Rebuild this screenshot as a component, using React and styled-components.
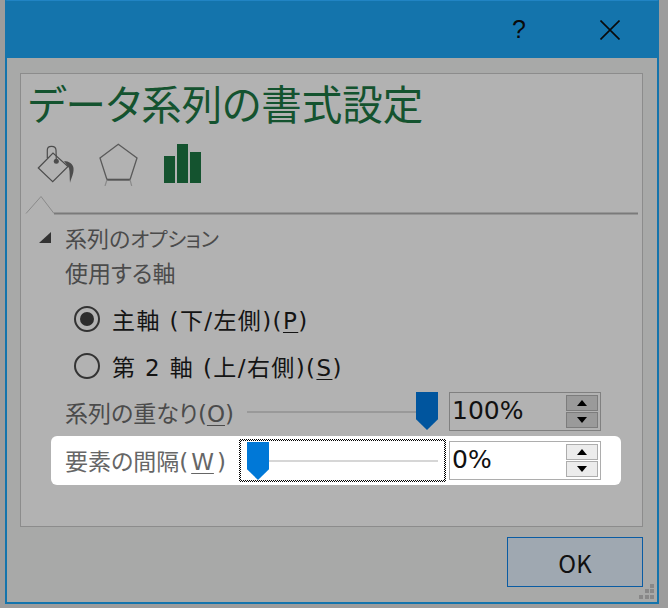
import React from 'react';
import styled, { createGlobalStyle } from 'styled-components';

const Global = createGlobalStyle`
  html, body { margin: 0; padding: 0; background: #9c9c9c; }
  body { font-family: "DejaVu Sans", "Noto Sans CJK JP", sans-serif; }
`;

const Screen = styled.div`
  width: 668px;
  height: 608px;
  padding-left: 5px;
  box-sizing: border-box;
  background: #9c9c9c;
  overflow: hidden;
  font-feature-settings: "palt";
`;

const Dialog = styled.div`
  width: 654px;
  height: 604px;
  box-sizing: border-box;
  border: 2px solid #1474ac;
  border-top: 1px solid #2184c4;
  display: flex;
  flex-direction: column;
  background: #a8a9a8;
`;

const TitleBar = styled.div`
  height: 57px;
  flex: none;
  background: #1474ac;
  display: flex;
  align-items: center;
  justify-content: flex-end;
  padding-right: 37px;
  gap: 74px;
`;

const Help = styled.span`
  font-family: "Liberation Sans", sans-serif;
  font-size: 25px;
  color: #0a0a0a;
  line-height: 1;
`;

const Body = styled.div`
  flex: 1;
  padding: 15px 14px 0 13px;
  display: flex;
  flex-direction: column;
  position: relative;
`;

const Panel = styled.div`
  height: 454px;
  box-sizing: border-box;
  border: 1px solid #8c8c8c;
  background: #b2b2b2;
  display: flex;
  flex-direction: column;
`;

const Title = styled.div`
  font-family: "Noto Sans CJK JP", sans-serif;
  font-size: 40.5px;
  line-height: 58px;
  color: #14532f;
  padding-left: 7px;
  height: 60px;
`;

const IconRow = styled.div`
  display: flex;
  align-items: flex-start;
  height: 50px;
  padding-left: 15px;
  margin-top: 8px;
`;

const TabLine = styled.svg`
  display: block;
  width: 621px;
  height: 20px;
  margin-top: 3px;
`;

const Section = styled.div`
  display: flex;
  align-items: center;
  height: 30px;
  margin-top: 7px;
  padding-left: 18px;
  gap: 14px;
  font-size: 22px;
  color: #4b4b4b;
`;

const Arrow = styled.span`
  width: 0;
  height: 0;
  border-left: 12px solid transparent;
  border-bottom: 11px solid #333;
`;

const SmallKana = styled.span`
  font-size: 20.5px;
  letter-spacing: -0.4px;
`;

const Label = styled.div`
  height: 30px;
  line-height: 30px;
  margin-top: 7px;
  padding-left: 44px;
  font-size: 23px;
  color: #4b4b4b;
`;

const Options = styled.div`
  display: flex;
  flex-direction: column;
  gap: 19px;
  margin-top: 16px;
  padding-left: 53px;
`;

const Option = styled.label`
  display: flex;
  align-items: center;
  gap: 12px;
  height: 28px;
  font-size: 23px;
  letter-spacing: 1.4px;
  color: #141414;
`;

const RadioMark = styled.span`
  width: 26px;
  height: 26px;
  box-sizing: border-box;
  border: 2px solid #333;
  border-radius: 50%;
  display: flex;
  align-items: center;
  justify-content: center;
  &::after {
    content: '';
    display: ${p => (p.$on ? 'block' : 'none')};
    width: 14px;
    height: 14px;
    border-radius: 50%;
    background: #2c2c2c;
  }
`;

const Key = styled.span`
  text-decoration: underline;
  text-underline-offset: 3px;
  text-decoration-thickness: 1px;
  margin: 0 ${p => p.$gap || 0}px;
`;

const Row = styled.div`
  display: flex;
  align-items: center;
  margin: ${p => (p.$active ? '4px 21px 0 30px' : '11px 0 0 44px')};
  padding: ${p => (p.$active ? '0 0 0 14px' : '0')};
  height: ${p => (p.$active ? '49px' : '41px')};
  background: ${p => (p.$active ? '#fff' : 'transparent')};
  border-radius: 6px;
  font-size: 23px;
  color: #4b4b4b;
  white-space: nowrap;
`;

const RowLabel = styled.span`
  width: ${p => (p.$active ? '174px' : '182px')};
  padding-bottom: ${p => (p.$active ? '2px' : '0')};
  flex: none;
  color: ${p => (p.$active ? '#666' : '#4b4b4b')};
`;

const Focus = styled.div`
  width: 207px;
  height: 43px;
  box-sizing: border-box;
  padding: 2px;
  flex: none;
  background: repeating-conic-gradient(#000 0 25%, #fff 0 50%) 0 0 / 2px 2px;
`;

const SliderBox = styled.div`
  position: relative;
  height: 100%;
  width: ${p => (p.$active ? '100%' : '191px')};
  background: ${p => (p.$active ? '#fff' : 'transparent')};
  flex: none;
  display: flex;
  align-items: center;
`;

const Track = styled.div`
  height: 2px;
  flex: 1;
  margin: ${p => (p.$active ? '0 6px' : '0 2px 0 0')};
  background: ${p => (p.$active ? '#d6d6d6' : '#999')};
`;

const Thumb = styled.div`
  position: absolute;
  top: 1px;
  left: ${p => (p.$active ? '6px' : '169px')};
  width: 22px;
  height: 38px;
  background: ${p => (p.$active ? '#0078d7' : '#00559e')};
  clip-path: polygon(0 0, 100% 0, 100% 72%, 50% 100%, 0 72%);
`;

const Spin = styled.div`
  width: 152px;
  height: 39px;
  box-sizing: border-box;
  border: 1px solid ${p => (p.$active ? '#adadad' : '#808080')};
  margin-left: ${p => (p.$active ? '3px' : '11px')};
  background: ${p => (p.$active ? '#fff' : 'transparent')};
  display: flex;
  align-items: center;
  padding: 2px 2px 2px 2px;
  font-size: 25px;
  color: #111;
`;

const SpinValue = styled.span`
  flex: 1;
  padding-bottom: 2px;
`;

const SpinButtons = styled.div`
  width: 32px;
  height: 100%;
  display: flex;
  flex-direction: column;
  gap: 1px;
`;

const SpinButton = styled.div`
  flex: 1;
  border: 1px solid ${p => (p.$active ? '#adadad' : '#7c7c7c')};
  background: ${p => (p.$active ? '#ececec' : '#9a9a9a')};
  display: flex;
  align-items: center;
  justify-content: center;
  &::after {
    content: '';
    width: 0;
    height: 0;
    border-left: 5px solid transparent;
    border-right: 5px solid transparent;
    ${p => (p.$down ? 'border-top: 6px solid #000;' : 'border-bottom: 6px solid #000;')}
  }
`;

const Footer = styled.div`
  display: flex;
  justify-content: flex-end;
  margin-top: 10px;
`;

const OkButton = styled.button`
  width: 136px;
  height: 50px;
  box-sizing: border-box;
  border: 1px solid #0a5ca3;
  background: #9fa8b1;
  font-family: "Noto Sans CJK JP", sans-serif;
  font-size: 24px;
  color: #111;
  padding: 0;
`;

const Grip = styled.svg`
  position: absolute;
  right: 1px;
  bottom: 1px;
  width: 18px;
  height: 18px;
`;

const Spinner = ({ value, active }) => (
  <Spin $active={active}>
    <SpinValue>{value}</SpinValue>
    <SpinButtons>
      <SpinButton $active={active} />
      <SpinButton $active={active} $down />
    </SpinButtons>
  </Spin>
);

export default function App() {
  return (
    <Screen>
      <Global />
      <Dialog>
        <TitleBar>
          <Help>?</Help>
          <svg width="20" height="20" viewBox="0 0 20 20">
            <path d="M0.5 0.5 L19.5 19.5 M19.5 0.5 L0.5 19.5" stroke="#0a0a0a" strokeWidth="1.6" fill="none" />
          </svg>
        </TitleBar>
        <Body>
          <Panel>
            <Title>データ系列の書式設定</Title>
            <IconRow>
              <svg width="40" height="44" viewBox="0 0 40 44">
                <path d="M2.3 26 L17 11 L32 24.5 L16.7 39.7 Z" fill="none" stroke="#4c4c4c" strokeWidth="1.2" />
                <path d="M11.3 16 V8 C11.3 3.5 19.5 3 20 8 L20.3 18" fill="none" stroke="#4c4c4c" strokeWidth="1.2" />
                <circle cx="20.3" cy="19.3" r="2.5" fill="#4c4c4c" />
                <path d="M28 19 C33 19 37 22 37.5 26 C38 32 35 36 34 41 C33.5 36 34 30 33 26 Z" fill="#4c4c4c" />
              </svg>
              <svg width="40" height="44" viewBox="0 0 40 44" style={{ marginLeft: 22 }}>
                <path d="M9 37.7 L2 16 L20.3 2.3 L39 16 L32 37.7" fill="none" stroke="#5a5a5a" strokeWidth="1.3" />
                <path d="M9 37.7 H32" stroke="#555" strokeWidth="2" />
                <path d="M9 37.7 L7 44 M32 37.7 L33.7 44" stroke="#8a8a8a" strokeWidth="1.2" />
              </svg>
              <svg width="37" height="44" viewBox="0 0 37 44" style={{ marginLeft: 26 }}>
                <path d="M0 14 H11 V41 H0 Z M13 2 H24 V41 H13 Z M26 10 H37 V41 H26 Z" fill="#14532f" />
              </svg>
            </IconRow>
            <TabLine viewBox="0 0 621 20">
              <path d="M5 18.5 L20 1.5 L33 18.5" fill="none" stroke="#8a8a8a" strokeWidth="1" />
              <path d="M33 18.5 H617" stroke="#7a7a7a" strokeWidth="2" />
            </TabLine>
            <Section>
              <Arrow />
              <span>系列の<SmallKana>オプション</SmallKana></span>
            </Section>
            <Label>使用する軸</Label>
            <Options>
              <Option>
                <RadioMark $on />
                <span>主軸 (下/左側)(<Key>P</Key>)</span>
              </Option>
              <Option>
                <RadioMark />
                <span>第 2 軸 (上/右側)(<Key>S</Key>)</span>
              </Option>
            </Options>
            <Row>
              <RowLabel>系列の重なり(<Key>O</Key>)</RowLabel>
              <SliderBox>
                <Track />
                <Thumb />
              </SliderBox>
              <Spinner value="100%" />
            </Row>
            <Row $active>
              <RowLabel $active>要素の間隔(<Key $gap={3}>W</Key>)</RowLabel>
              <Focus>
                <SliderBox $active>
                  <Track $active />
                  <Thumb $active />
                </SliderBox>
              </Focus>
              <Spinner value="0%" active />
            </Row>
          </Panel>
          <Footer>
            <OkButton>OK</OkButton>
          </Footer>
          <Grip viewBox="0 0 18 18">
            <path d="M12 1h4v4h-4z M7 6h4v4H7z M12 6h4v4h-4z M1 12h4v4H1z M7 12h4v4H7z M12 12h4v4h-4z" fill="#888" />
          </Grip>
        </Body>
      </Dialog>
    </Screen>
  );
}
